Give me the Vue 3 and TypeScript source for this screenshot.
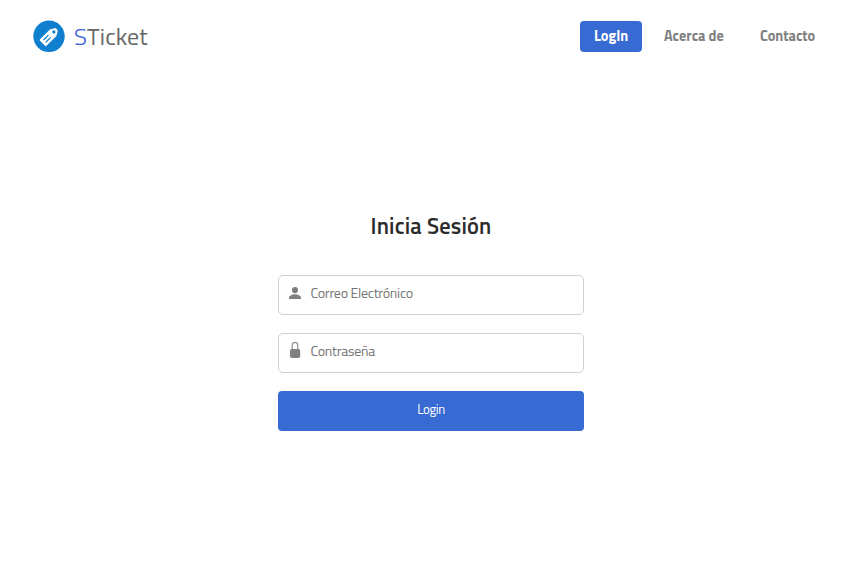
<script setup lang="ts">
import { ref } from 'vue'

interface NavItem {
  label: string
  kind: string
}

const navItems: NavItem[] = [
  { label: 'LogIn', kind: 'login' },
  { label: 'Acerca de', kind: 'about' },
  { label: 'Contacto', kind: 'contact' },
]
const active = ref('login')
const email = ref('')
const password = ref('')
</script>

<template>
  <div class="page">
    <header class="header">
      <div class="brand">
        <svg class="logo" viewBox="0 0 32 32" aria-hidden="true">
          <circle cx="16" cy="16.3" r="15.7" fill="#107fd0" />
          <g transform="translate(16.6 16.2) rotate(-45)">
            <path fill="#fff" d="M-9-4.6H5L9.2-2.2Q10-1.6 10-.8V.8Q10 1.6 9.2 2.2L5 4.6H-9Q-10 4.6-10 3.6V-3.6Q-10-4.6-9-4.6Z" />
            <circle cx="6" cy="0" r="1.6" fill="#107fd0" />
            <path stroke="#107fd0" stroke-width="1.2" d="M-7-1.6H0M-7 1.6H0" />
          </g>
        </svg>
        <span class="name"><span class="initial">S</span>Ticket</span>
      </div>
      <nav class="nav">
        <a
          v-for="item in navItems"
          :key="item.kind"
          :class="['link', item.kind, { active: active === item.kind }]"
          @click="active = item.kind"
        >{{ item.label }}</a>
      </nav>
    </header>

    <form class="form" @submit.prevent>
      <h1 class="title">Inicia Sesión</h1>
      <label class="field">
        <svg class="icon" viewBox="0 0 14 18" aria-hidden="true">
          <circle cx="7" cy="6.1" r="3.1" fill="#808080" />
          <path fill="#808080" d="M1 15v-1.2C1 11.4 4.5 10.2 7 10.2s6 1.2 6 3.6V15Z" />
        </svg>
        <input v-model="email" class="input" type="text" placeholder="Correo Electrónico" />
      </label>
      <label class="field">
        <svg class="icon" viewBox="0 0 14 18" aria-hidden="true">
          <path fill="none" stroke="#858585" stroke-width="1.1" d="M4.2 7.5V3.2a2.8 2.8 0 0 1 5.6 0V7.5" />
          <rect x="2" y="7" width="10.2" height="9" rx="2" fill="#808080" />
        </svg>
        <input v-model="password" class="input" type="password" placeholder="Contraseña" />
      </label>
      <button class="submit" type="submit">Login</button>
    </form>
  </div>
</template>

<style>
body {
  background: #fff;
}
</style>

<style scoped>
.page {
  box-sizing: border-box;
  height: 562px;
  overflow: hidden;
  font-family: "Titillium Web", Roboto, "Open Sans", sans-serif;
  color: #2b2b2b;
}
.header {
  display: flex;
  justify-content: space-between;
  align-items: center;
  height: 32px;
  padding: 20px 50px 0 33px;
}
.brand {
  display: flex;
  align-items: center;
  gap: 9px;
}
.logo {
  width: 32px;
  height: 32px;
}
.name {
  font-size: 24px;
  line-height: 32px;
  font-weight: 400;
  letter-spacing: 0.1px;
  color: #666;
}
.initial {
  color: #3c62dc;
  font-weight: 300;
}
.nav {
  display: flex;
  gap: 8px;
}
.link {
  box-sizing: border-box;
  height: 31px;
  padding: 0 14px;
  border-radius: 4px;
  font-size: 14.4px;
  line-height: 31px;
  font-weight: 700;
  color: #808080;
  white-space: nowrap;
  cursor: pointer;
}
.link.login {
  width: 62px;
}
.link.about {
  width: 88px;
}
.link.contact {
  width: 70px;
  padding-right: 0;
}
.link.active {
  background: #386ad4;
  color: #fff;
}
.form {
  display: flex;
  flex-direction: column;
  gap: 18px;
  width: 306px;
  margin: 158px 0 0 278px;
}
.title {
  margin: 0 0 15px;
  font-size: 22.4px;
  line-height: 32px;
  font-weight: 600;
  letter-spacing: 0.17px;
  text-align: center;
}
.field {
  display: flex;
  box-sizing: border-box;
  height: 40px;
  padding: 8px 10px 0 9px;
  border: 1px solid #d1d1d1;
  border-radius: 5px;
  gap: 8.5px;
}
.icon {
  flex: none;
  width: 14px;
  height: 18px;
}
.input {
  flex: 1;
  min-width: 0;
  height: 18px;
  padding: 0;
  border: 0;
  outline: 0;
  background: none;
  font: 14px/18px "Titillium Web", Roboto, "Open Sans", sans-serif;
  letter-spacing: -0.27px;
}
.input::placeholder {
  color: #757575;
}
.submit {
  height: 40px;
  margin-top: -0.5px;
  padding: 0 0 3px;
  border: 0;
  border-radius: 4px;
  background: #386ad4;
  color: #fff;
  font: 13px/20px "Titillium Web", Roboto, "Open Sans", sans-serif;
  letter-spacing: -0.4px;
}
</style>
